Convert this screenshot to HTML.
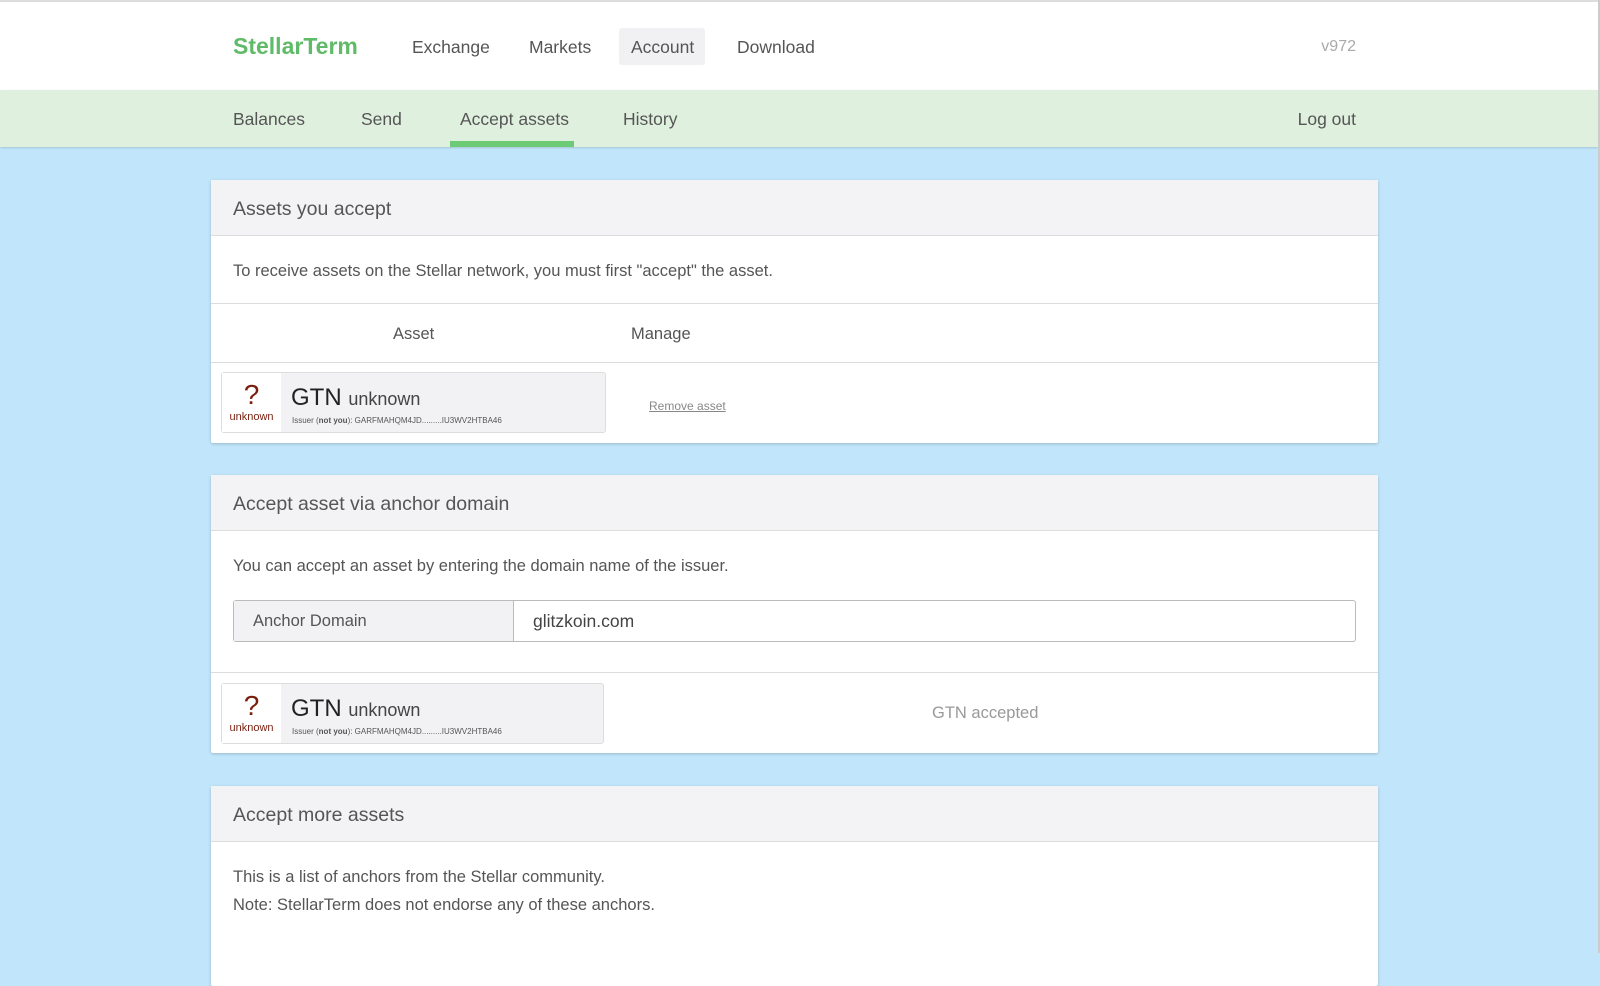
<!DOCTYPE html>
<html><head><meta charset="utf-8"><style>
*{box-sizing:border-box;margin:0;padding:0}
body{width:1600px;height:953px;overflow:hidden;background:#c1e6fb;font-family:"Liberation Sans",sans-serif;color:#444;position:relative}
.abs{position:absolute;white-space:nowrap}
.hdr{position:absolute;left:0;top:0;width:1598px;height:90px;background:#fff;border-top:2px solid #ddd}
.sub{position:absolute;left:0;top:90px;width:1598px;height:57px;background:#dff1de;box-shadow:0 1px 2px rgba(0,0,0,.15)}
.rb{position:absolute;right:0;top:0;width:2px;height:953px;background:#ccc}
.nav{font-size:17.5px;color:#555}
.panel{position:absolute;left:211px;width:1167px;background:#fff;box-shadow:0 1px 3px rgba(0,0,0,.2);border-radius:2px}
.ph{height:56px;background:#f3f3f5;border-bottom:1px solid #ddd;font-size:19.5px;color:#555;padding:18px 22px}
.t{font-size:16.5px;color:#555}
.card{position:absolute;border:1px solid #ddd;background:#f2f2f4;border-radius:3px;height:61px}
.card .ic{position:absolute;left:0;top:0;width:59px;height:59px;background:#fff;text-align:center;color:#7a1f0e}
.card .q{font-size:28px;line-height:32px;margin-top:6px}
.card .u{font-size:11px}
.card .g{position:absolute;left:69px;top:11px;font-size:24px;color:#222}
.card .g span{font-size:18px;color:#444}
.card .is{position:absolute;left:70px;top:43px;font-size:8px;color:#555}
</style></head><body>
<div class="hdr"></div>
<div class="abs" style="left:233px;top:33px;font-size:23px;font-weight:bold;color:#5fbb67">StellarTerm</div>
<div class="abs nav" style="left:412px;top:37px">Exchange</div>
<div class="abs nav" style="left:529px;top:37px">Markets</div>
<div class="abs" style="left:619px;top:28px;width:86px;height:37px;background:#f1f1f3;border-radius:3px"></div>
<div class="abs nav" style="left:631px;top:37px">Account</div>
<div class="abs nav" style="left:737px;top:37px">Download</div>
<div class="abs" style="right:244px;top:38px;font-size:16px;color:#aaa">v972</div>
<div class="sub"></div>
<div class="abs nav" style="left:233px;top:109px">Balances</div>
<div class="abs nav" style="left:361px;top:109px">Send</div>
<div class="abs nav" style="left:460px;top:109px">Accept assets</div>
<div class="abs" style="left:450px;top:141px;width:124px;height:6px;background:#6ccb74"></div>
<div class="abs nav" style="left:623px;top:109px">History</div>
<div class="abs nav" style="right:244px;top:109px">Log out</div>
<div class="rb"></div>

<div class="panel" style="top:180px;height:263px">
 <div class="ph">Assets you accept</div>
 <div class="abs t" style="left:22px;top:82px">To receive assets on the Stellar network, you must first "accept" the asset.</div>
 <div class="abs" style="left:0;top:123px;width:1167px;border-top:1px solid #ddd"></div>
 <div class="abs t" style="left:182px;top:145px">Asset</div>
 <div class="abs t" style="left:420px;top:145px">Manage</div>
 <div class="abs" style="left:0;top:182px;width:1167px;border-top:1px solid #ddd"></div>
 <div class="card" style="left:10px;top:192px;width:385px"><div class="ic"><div class="q">?</div><div class="u">unknown</div></div><div class="g">GTN <span>unknown</span></div><div class="is">Issuer (<b>not you</b>): GARFMAHQM4JD.........IU3WV2HTBA46</div></div>
 <div class="abs" style="left:438px;top:219px;font-size:12px;color:#888;text-decoration:underline">Remove asset</div>
</div>

<div class="panel" style="top:475px;height:278px">
 <div class="ph">Accept asset via anchor domain</div>
 <div class="abs t" style="left:22px;top:82px">You can accept an asset by entering the domain name of the issuer.</div>
 <div class="abs" style="left:22px;top:125px;width:1123px;height:42px;border:1px solid #bbb;border-radius:3px;background:#fff"></div>
 <div class="abs" style="left:23px;top:126px;width:280px;height:40px;background:#f2f2f4;border-right:1px solid #bbb"></div>
 <div class="abs t" style="left:42px;top:137px">Anchor Domain</div>
 <div class="abs" style="left:322px;top:136px;font-size:17.5px;color:#444">glitzkoin.com</div>
 <div class="abs" style="left:0;top:197px;width:1167px;border-top:1px solid #ddd"></div>
 <div class="card" style="left:10px;top:208px;width:383px"><div class="ic"><div class="q">?</div><div class="u">unknown</div></div><div class="g">GTN <span>unknown</span></div><div class="is">Issuer (<b>not you</b>): GARFMAHQM4JD.........IU3WV2HTBA46</div></div>
 <div class="abs t" style="left:721px;top:229px;color:#999">GTN accepted</div>
</div>

<div class="panel" style="top:786px;height:200px">
 <div class="ph">Accept more assets</div>
 <div class="abs t" style="left:22px;top:82px">This is a list of anchors from the Stellar community.</div>
 <div class="abs t" style="left:22px;top:110px">Note: StellarTerm does not endorse any of these anchors.</div>
</div>
</body></html>
